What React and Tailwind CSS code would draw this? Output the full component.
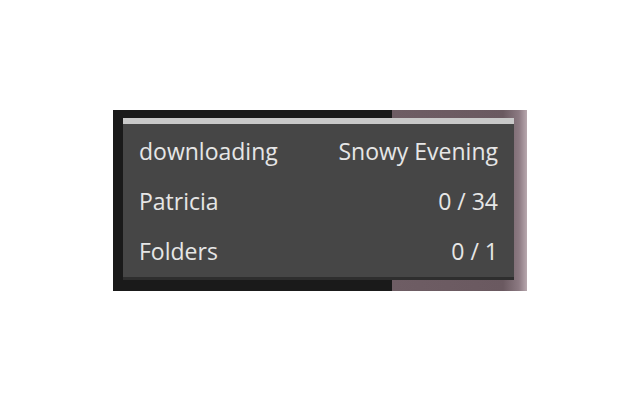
import React from "react";

const rows = [
  { label: "downloading", value: "Snowy Evening" },
  { label: "Patricia", value: "0 / 34" },
  { label: "Folders", value: "0 / 1" },
];

export default function App() {
  return (
    <div className="w-[640px] h-[400px] bg-white pt-[110px] pl-[113px] font-['Open_Sans',sans-serif]">
      {/* frame: dark on the left, pinkish blur on the right */}
      <div className="w-[414px] h-[181px] pl-[10px] pt-[8px] bg-[linear-gradient(to_right,#1a1a1a_0px,#1a1a1a_279px,#6e5d64_279px,#6a5960_390px,#8c7a82_406px,#b8a8ae_414px)]">
        <div className="w-[391px] h-[162px] bg-[#464646] border-b-[3px] border-[#2e2e2e]">
          <div className="h-[6px] bg-[#c9c9c9]" />
          <div className="pt-[2px]">
            {rows.map((r) => (
              <div
                key={r.label}
                className="flex justify-between px-4 h-[50px] leading-[50px] text-[23px] text-[#e6e6e6]"
              >
                <span>{r.label}</span>
                <span>{r.value}</span>
              </div>
            ))}
          </div>
        </div>
      </div>
    </div>
  );
}
